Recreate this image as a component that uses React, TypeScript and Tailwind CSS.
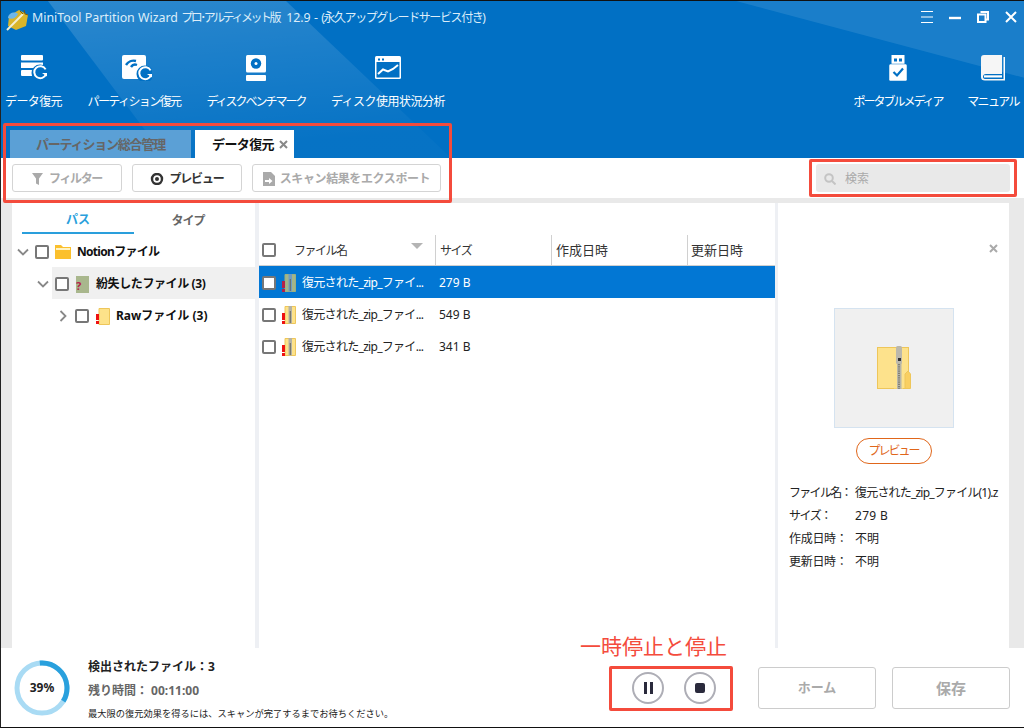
import React from "react";

function Check() {
  return <span className="block w-[14px] h-[14px] shrink-0 rounded-[2px] border-2 border-[#777777] bg-white" />;
}

function Chevron({ open }: { open: boolean }) {
  return (
    <svg width="12" height="12" viewBox="0 0 12 12" className="shrink-0">
      <path d={open ? "M1 3.5 L6 8.5 L11 3.5" : "M3.5 1 L8.5 6 L3.5 11"} fill="none" stroke="#888888" strokeWidth="1.8" />
    </svg>
  );
}

function ZipIcon({ dim = false }: { dim?: boolean }) {
  return (
    <svg width="14" height="18" viewBox="0 0 14 18" className="shrink-0">
      <path d="M3 0.5H13.5V17.5H3Z" fill={dim ? "#a3b58a" : "#fde28a"} stroke={dim ? "#9db07f" : "#eec65a"} />
      <path d="M6.5 0H10V17.5H6.5Z" fill={dim ? "#6f9cc4" : "#b4b2a4"} />
      <path d="M7.8 5H8.8V17H7.8Z" fill="#6a6a5e" />
      <rect x="0" y="7" width="3" height="7" fill={dim ? "#b5204a" : "#ee1111"} />
      <rect x="0" y="15" width="3" height="3" fill={dim ? "#b5204a" : "#ee1111"} />
    </svg>
  );
}

function TopItem({ w, label, track, icon, children }: { w: string; label: string; track: string; icon?: string; children: React.ReactNode }) {
  return (
    <div className={`flex flex-col items-center shrink-0 ${w}`}>
      <div className={`h-[30px] flex items-center justify-center ${icon ?? ""}`}>{children}</div>
      <span className={`mt-[11px] text-[12px] leading-[16px] text-white whitespace-nowrap ${track}`}>{label}</span>
    </div>
  );
}

function Recover({ cx = 19, cy = 20 }: { cx?: number; cy?: number }) {
  return (
    <g>
      <circle cx={cx} cy={cy} r="8.5" fill="#0170c4" />
      <path d={`M${cx + 5.6} ${cy - 3.6} A6 6 0 1 0 ${cx + 6} ${cy + 1}`} fill="none" stroke="#fff" strokeWidth="2" />
      <path d={`M${cx + 2} ${cy} H${cx + 7} V${cy + 3.5} Z`} fill="#fff" />
    </g>
  );
}

const rows = ["279 B", "549 B", "341 B"];
const info = [
  { k: "ファイル名：", v: "復元された_zip_ファイル(1).z", kt: "tracking-[-1.7px]", vt: "tracking-[-0.8px]" },
  { k: "サイズ：", v: "279 B", kt: "tracking-[-1.5px]", vt: "tracking-[0.3px]" },
  { k: "作成日時：", v: "不明", kt: "tracking-[-0.3px]", vt: "" },
  { k: "更新日時：", v: "不明", kt: "tracking-[-0.3px]", vt: "" },
];

export default function App() {
  return (
    <div
      className="relative w-[1024px] h-[728px] overflow-hidden bg-white flex flex-col border-l border-b border-t border-t-[#111] border-l-[#222] border-b-[#111] text-[12px] text-[#222]"
      style={{ fontFamily: '"Noto Sans", "Noto Sans CJK JP", sans-serif' }}
    >
      {/* header */}
      <header className="relative h-[157px] shrink-0 bg-[#0170c4] flex flex-col text-white">
        <svg className="absolute left-0 top-0" width="1024" height="157" viewBox="0 0 1024 157">
          <defs>
            <linearGradient id="band" x1="0" y1="0" x2="0.25" y2="1">
              <stop offset="0" stopColor="#ffffff" stopOpacity="0.17" />
              <stop offset="1" stopColor="#ffffff" stopOpacity="0.02" />
            </linearGradient>
          </defs>
          <path d="M47 0 L285 0 L450 157 L165 157 Z" fill="url(#band)" />
          <path d="M735 0 L1024 77 L1024 0 Z" fill="#ffffff" fillOpacity="0.1" />
        </svg>
        <div className="relative h-[36px] shrink-0 flex items-center pl-[5px] pr-[7px]">
          <svg width="22" height="23" viewBox="0 0 22 23" className="shrink-0">
            <path d="M3 8 L13 2 L22 7 L20 18 L10 22 L2 18 Z" fill="#d9b52a" />
            <path d="M2 10 C2 5 9 3 12 6 C10 10 6 12 2 10Z" fill="#6fb7e8" />
            <path d="M1 22 L17 6" stroke="#f4efd0" strokeWidth="2" />
            <path d="M14 3 L17 6 M18 2 L19 6 L22 7" stroke="#7a5a10" strokeWidth="1" fill="none" />
          </svg>
          <span className="ml-[4px] mb-[2px] text-[12.4px] text-[#dcedf9] whitespace-nowrap">
            MiniTool Partition Wizard <span className="text-[12px] tracking-[-2.5px]">プロ･アルティメット版</span> <span className="ml-[4px]">12.9 -</span> <span className="text-[12px] tracking-[-1.4px]">(永久アップグレードサービス付き)</span>
          </span>
          <div className="ml-auto flex items-center gap-[16px] mb-[5px]">
            <svg width="12" height="12" viewBox="0 0 12 12"><path d="M0 .5H12M0 6H12M0 11.5H12" stroke="#fff" strokeWidth="1" /></svg>
            <svg width="12" height="12" viewBox="0 0 12 12"><path d="M0 7H12" stroke="#fff" strokeWidth="2.4" /></svg>
            <svg width="12" height="12" viewBox="0 0 12 12"><path d="M3.5 1H11V8.5H8.5M1 3.5H8.5V11H1Z" fill="none" stroke="#fff" strokeWidth="2" /></svg>
            <svg width="12" height="12" viewBox="0 0 12 12"><path d="M1 1L11 11M11 1L1 11" stroke="#fff" strokeWidth="2" /></svg>
          </div>
        </div>

        <div className="relative flex h-[72px] mt-[16px] shrink-0">
          <TopItem w="w-[65px]" label="データ復元" track="tracking-[-0.6px]" icon="ml-[3px]">
            <svg width="28" height="26" viewBox="0 0 28 26">
              <rect x="0" y="0" width="22" height="5.5" fill="#fff" rx="1" />
              <rect x="0" y="7.5" width="22" height="5.5" fill="#fff" />
              <rect x="0" y="15" width="22" height="6" fill="#fff" rx="1" />
              <Recover cx={19} cy={18} />
            </svg>
          </TopItem>
          <TopItem w="w-[136px]" label="パーティション復元" track="tracking-[-1.6px]" icon="ml-[6px]">
            <svg width="30" height="26" viewBox="0 0 30 26">
              <rect x="0" y="0" width="24" height="24" rx="2" fill="#fff" />
              <path d="M4 10 A9 9 0 0 1 14 6" fill="none" stroke="#0170c4" strokeWidth="2.4" />
              <path d="M9 12 A5 5 0 0 1 15 10" fill="none" stroke="#0170c4" strokeWidth="2.4" />
              <Recover cx={23} cy={19} />
            </svg>
          </TopItem>
          <TopItem w="w-[108px]" label="ディスクベンチマーク" track="tracking-[-2px]">
            <svg width="20" height="26" viewBox="0 0 20 26">
              <rect x="0" y="0" width="20" height="17.5" rx="1.5" fill="#fff" />
              <rect x="0" y="20" width="20" height="6" rx="1" fill="#fff" />
              <circle cx="10" cy="8.5" r="5.2" fill="#0170c4" />
              <circle cx="10" cy="8.5" r="1.5" fill="#fff" />
            </svg>
          </TopItem>
          <TopItem w="w-[156px]" label="ディスク使用状況分析" track="tracking-[-0.5px]">
            <svg width="26" height="24" viewBox="0 0 26 24">
              <rect x="0" y="0" width="26" height="23" rx="1.5" fill="#fff" />
              <rect x="1.5" y="6" width="23" height="15.5" fill="#0170c4" />
              <rect x="3" y="2.5" width="2" height="2" fill="#0170c4" />
              <rect x="7" y="2.5" width="2" height="2" fill="#0170c4" />
              <path d="M3 18 L8 13.5 L13 15.5 L18 13 L23 9" fill="none" stroke="#fff" strokeWidth="2" />
            </svg>
          </TopItem>
          <div className="ml-auto flex pr-[3px]">
            <TopItem w="w-[104px]" label="ポータブルメディア" track="tracking-[-2px]">
              <svg width="18" height="26" viewBox="0 0 18 26">
                <rect x="2.5" y="0" width="13" height="10" fill="#fff" />
                <rect x="5" y="3.5" width="3" height="3" fill="#0170c4" />
                <rect x="10" y="3.5" width="3" height="3" fill="#0170c4" />
                <rect x="0" y="9" width="18" height="17" rx="1.5" fill="#fff" stroke="#0170c4" strokeWidth="0.5" />
                <path d="M4.5 17 L8 20.5 L14 13.5" fill="none" stroke="#0170c4" strokeWidth="2.2" />
              </svg>
            </TopItem>
            <div className="w-[15px]" />
            <TopItem w="w-[56px]" label="マニュアル" track="tracking-[-1.6px]">
              <svg width="24" height="26" viewBox="0 0 24 26">
                <path d="M3 0 H21 V19 H5 Q2 19 2 22 Q2 24 5 24 H24 V25.5 H4 Q0 25.5 0 22 V3 Q0 0 3 0Z" fill="#f6f6f6" />
                <path d="M22.5 2 H24 V24 H22.5Z" fill="#fff" />
                <rect x="3" y="20.3" width="18" height="2.2" fill="#fff" />
              </svg>
            </TopItem>
          </div>
        </div>

        <div className="relative mt-auto flex h-[28px] pl-[9px] gap-[4px]">
          <div className="w-[181px] bg-[#5ba0d6] flex items-center justify-center pt-[1px] text-[13px] font-bold tracking-[-1.2px] text-[#666666]">パーティション総合管理</div>
          <div className="w-[99px] bg-white flex items-center pl-[17px] pt-[1px] gap-[5px] text-[13px] font-bold tracking-[-0.6px] text-[#111]">
            データ復元
            <svg width="9" height="9" viewBox="0 0 9 9"><path d="M1 1L8 8M8 1L1 8" stroke="#888" strokeWidth="2" /></svg>
          </div>
        </div>
      </header>

      {/* toolbar */}
      <div className="h-[40px] shrink-0 flex items-center pl-[11px] pr-[14px] bg-white">
        <div className="flex gap-[10px] font-bold text-[12px]">
          <div className="w-[110px] h-[28px] pt-[1px] border border-[#d4d4d4] rounded-[3px] flex items-center justify-center gap-[6px] text-[#aaaaaa] tracking-[-1.4px]">
            <svg width="11" height="12" viewBox="0 0 11 12"><path d="M0 0H11L7 5.5V12L4 10.5V5.5Z" fill="#aaa" /></svg>
            フィルター
          </div>
          <div className="w-[110px] h-[28px] pt-[1px] border border-[#d4d4d4] rounded-[3px] flex items-center justify-center gap-[5px] text-[#333] tracking-[-1.2px]">
            <svg width="14" height="12" viewBox="0 0 14 12"><circle cx="7" cy="6" r="5" fill="none" stroke="#333" strokeWidth="2.4" /><circle cx="7" cy="6" r="2" fill="#333" /></svg>
            プレビュー
          </div>
          <div className="w-[189px] h-[28px] pt-[1px] border border-[#d4d4d4] rounded-[3px] flex items-center justify-center gap-[5px] text-[#aaaaaa] tracking-[-0.4px]">
            <svg width="12" height="14" viewBox="0 0 12 14"><path d="M0 0H8L12 4V14H0Z" fill="#aaa" /><path d="M2 8H6V6L9.5 9L6 12V10H2Z" fill="#fff" /></svg>
            スキャン結果をエクスポート
          </div>
        </div>
        <div className="ml-auto w-[194px] h-[28px] pt-[2px] rounded-[3px] bg-[#e9e9e9] flex items-center pl-[8px] gap-[9px] text-[#aaaaaa]">
          <svg width="12" height="12" viewBox="0 0 12 12"><circle cx="5" cy="5" r="3.8" fill="none" stroke="#c4c4c4" strokeWidth="2" /><path d="M8 8L11.5 11.5" stroke="#c4c4c4" strokeWidth="2" /></svg>
          検索
        </div>
      </div>

      {/* body */}
      <main className="h-[450px] shrink-0 bg-[#e9e9e9] pt-[5px] pl-[11px] pr-[15px] flex">
        <div className="flex-1 flex bg-white min-w-0">
          {/* tree */}
          <aside className="w-[243px] shrink-0 flex flex-col">
            <div className="h-[32px] flex shrink-0 font-bold">
              <div className="ml-[10px] w-[112px] h-[24px] mt-[7px] pb-[3px] border-b-2 border-[#2a9fdc] text-[#2a9fdc] flex items-center justify-center">パス</div>
              <div className="w-[108px] mt-[7px] h-[24px] pb-[3px] text-[#666] tracking-[-1px] flex items-center justify-center">タイプ</div>
            </div>
            <div className="h-[32px] flex items-center font-bold text-[12px] text-[#111] pl-[5px] pt-[2px] gap-[6px]">
              <Chevron open />
              <Check />
              <svg width="16" height="14" viewBox="0 0 16 14" className="shrink-0"><path d="M0 0H6L8 2H16V14H0Z" fill="#fbc02d" /><rect x="1" y="3" width="14" height="2" fill="#fff3c4" /></svg>
              <span className="tracking-[-0.7px]">Notionファイル</span>
            </div>
            <div className="h-[32px] ml-[40px] pt-[2px] bg-[#f0f0f0] flex items-center font-bold text-[#111]">
              <span className="-ml-[15px] mr-[6px] flex"><Chevron open /></span>
              <Check />
              <svg width="13" height="17" viewBox="0 0 13 17" className="ml-[7px] shrink-0">
                <rect x="0" y="0" width="13" height="17" fill="#a9b78d" />
                <text x="0" y="14" fontSize="11" fontWeight="700" fill="#b5204a">?</text>
              </svg>
              <span className="ml-[7px] tracking-[-0.4px] whitespace-nowrap">紛失したファイル (3)</span>
            </div>
            <div className="h-[32px] flex items-center font-bold text-[#111] pl-[45px] pt-[2px]">
              <Chevron open={false} />
              <span className="ml-[6px]"><Check /></span>
              <svg width="14" height="17" viewBox="0 0 14 17" className="ml-[7px] shrink-0">
                <path d="M3 .5H13.5V16.5H3Z" fill="#fde28a" stroke="#eec65a" />
                <rect x="0" y="6" width="3" height="6" fill="#ee1111" />
                <rect x="0" y="13" width="3" height="3" fill="#ee1111" />
              </svg>
              <span className="ml-[6px] whitespace-nowrap">Rawファイル (3)</span>
            </div>
          </aside>
          <div className="w-[4px] shrink-0 bg-[#eef0f4]" />

          {/* list */}
          <section className="w-[516px] shrink-0 flex flex-col pt-[32px]">
            <div className="h-[31px] flex items-center border-b border-[#d0d0d0] text-[#333]">
              <span className="ml-[3px]"><Check /></span>
              <span className="ml-[18px] w-[117px] pt-[2px] tracking-[-1.5px]">ファイル名</span>
              <svg width="12" height="6" viewBox="0 0 12 6" className="mb-[8px]"><path d="M0 0H12L6 6Z" fill="#b4b4b4" /></svg>
              <span className="ml-[12px] h-full w-[1px] bg-[#d0d0d0]" />
              <span className="w-[115px] pl-[4px] pt-[2px] tracking-[-1.5px]">サイズ</span>
              <span className="h-full w-[1px] bg-[#d0d0d0]" />
              <span className="w-[135px] pl-[4px] pt-[2px] text-[13px]">作成日時</span>
              <span className="h-full w-[1px] bg-[#d0d0d0]" />
              <span className="pl-[3px] pt-[2px] text-[13px]">更新日時</span>
            </div>
            {rows.map((size, i) => (
              <div key={size} className={`h-[32px] pt-[2px] flex items-center ${i === 0 ? "bg-[#0277d4] text-white" : "text-[#222]"}`}>
                <span className="ml-[3px]"><Check /></span>
                <span className="ml-[6px] flex"><ZipIcon dim={i === 0} /></span>
                <span className="ml-[6px] w-[137px] tracking-[-0.7px] whitespace-nowrap">復元された_zip_ファイ...</span>
                <span>{size}</span>
              </div>
            ))}
          </section>
          <div className="w-[3px] shrink-0 bg-[#eef0f4]" />

          {/* detail */}
          <aside className="flex-1 min-w-0 relative flex flex-col items-center pt-[105px]">
            <svg width="9" height="9" viewBox="0 0 9 9" className="absolute top-[41px] right-[11px]"><path d="M1 1L8 8M8 1L1 8" stroke="#aaa" strokeWidth="2" /></svg>
            <div className="w-[120px] h-[120px] bg-[#f0f0f0] border border-[#d5e3f0] flex items-center justify-center">
              <svg width="34" height="44" viewBox="0 0 34 44">
                <rect x="0.5" y="1.5" width="31" height="41" fill="#fde28c" stroke="#eec65a" />
                <path d="M28 42.5 V28 L31 25 L33.5 28 V42.5 Z" fill="#f9cf62" stroke="#eec65a" />
                <path d="M17 28 H26 V42.5 H17 Z" fill="#fde28c" />
                <rect x="19" y="0" width="6" height="18" rx="1.5" fill="#bbb8ac" />
                <rect x="21" y="12" width="3" height="3" fill="#333" />
                <rect x="20" y="17" width="4.5" height="26" fill="#b8b6a8" />
                <path d="M22 18V43" stroke="#5a5a50" strokeWidth="1.2" strokeDasharray="1.2 1" />
              </svg>
            </div>
            <div className="mt-[10px] w-[76px] h-[26px] rounded-full border border-[#e0661a] text-[#e0661a] tracking-[-2px] flex items-center justify-center">プレビュー</div>
            <div className="self-stretch mt-[19px] pl-[11px] flex flex-col gap-[3px] text-[#222]">
              {info.map(({ k, v, kt, vt }) => (
                <div key={k} className="h-[20px] flex items-center whitespace-nowrap">
                  <span className={`w-[66px] shrink-0 ${kt}`}>{k}</span>
                  <span className={vt}>{v}</span>
                </div>
              ))}
            </div>
          </aside>
        </div>
      </main>

      {/* footer */}
      <footer className="flex-1 flex items-center pl-[13px] pr-[14px]">
        <div className="relative w-[56px] h-[56px] shrink-0 flex items-center justify-center font-bold text-[12px] text-[#222]">
          <svg className="absolute inset-0" width="56" height="56" viewBox="0 0 56 56">
            <circle cx="28" cy="28" r="25" fill="none" stroke="#a9dbf4" strokeWidth="5" />
            <circle cx="28" cy="28" r="25" fill="none" stroke="#29a0dd" strokeWidth="5" strokeDasharray="55 157" transform="rotate(-95 28 28)" />
          </svg>
          39%
        </div>
        <div className="ml-[18px] pt-[4px] flex flex-col">
          <span className="font-bold text-[12px] leading-[16px] text-[#222] whitespace-nowrap">検出されたファイル：3</span>
          <span className="mt-[8px] font-bold text-[12px] leading-[16px] text-[#666] whitespace-nowrap">残り時間： 00:11:00</span>
          <span className="mt-[8px] text-[9.25px] leading-[14px] text-[#222] whitespace-nowrap">最大限の復元効果を得るには、スキャンが完了するまでお待ちください。</span>
        </div>
        <div className="ml-auto flex items-center">
          <div className="w-[32px] h-[32px] rounded-full border-2 border-[#aeaeb6] flex items-center justify-center gap-[3px]">
            <span className="w-[3px] h-[12px] bg-[#2a2a3c]" />
            <span className="w-[3px] h-[12px] bg-[#2a2a3c]" />
          </div>
          <div className="ml-[20px] w-[32px] h-[32px] rounded-full border-2 border-[#aeaeb6] flex items-center justify-center">
            <span className="w-[10px] h-[10px] rounded-[2px] bg-[#2a2a3c]" />
          </div>
          <div className="ml-[42px] w-[118px] h-[42px] pt-[1px] border border-[#cccccc] rounded-[3px] flex items-center justify-center font-bold text-[13px] text-[#aaaaaa]">ホーム</div>
          <div className="ml-[16px] w-[118px] h-[42px] pt-[1px] border border-[#cccccc] rounded-[3px] flex items-center justify-center font-bold text-[15px] text-[#aaaaaa]">保存</div>
        </div>
      </footer>

      {/* annotations */}
      <div className="absolute left-[2px] top-[122px] w-[449px] h-[80px] border-[3px] border-[#f44b3c] rounded-[2px]" />
      <div className="absolute left-[808px] top-[158px] w-[208px] h-[38px] border-[3px] border-[#f44b3c] rounded-[2px]" />
      <div className="absolute left-[608px] top-[665px] w-[124px] h-[45px] border-[3px] border-[#f44b3c] rounded-[2px]" />
      <span className="absolute left-[579px] top-[631px] text-[21px] leading-[28px] text-[#f44b3c] whitespace-nowrap">一時停止と停止</span>
    </div>
  );
}
